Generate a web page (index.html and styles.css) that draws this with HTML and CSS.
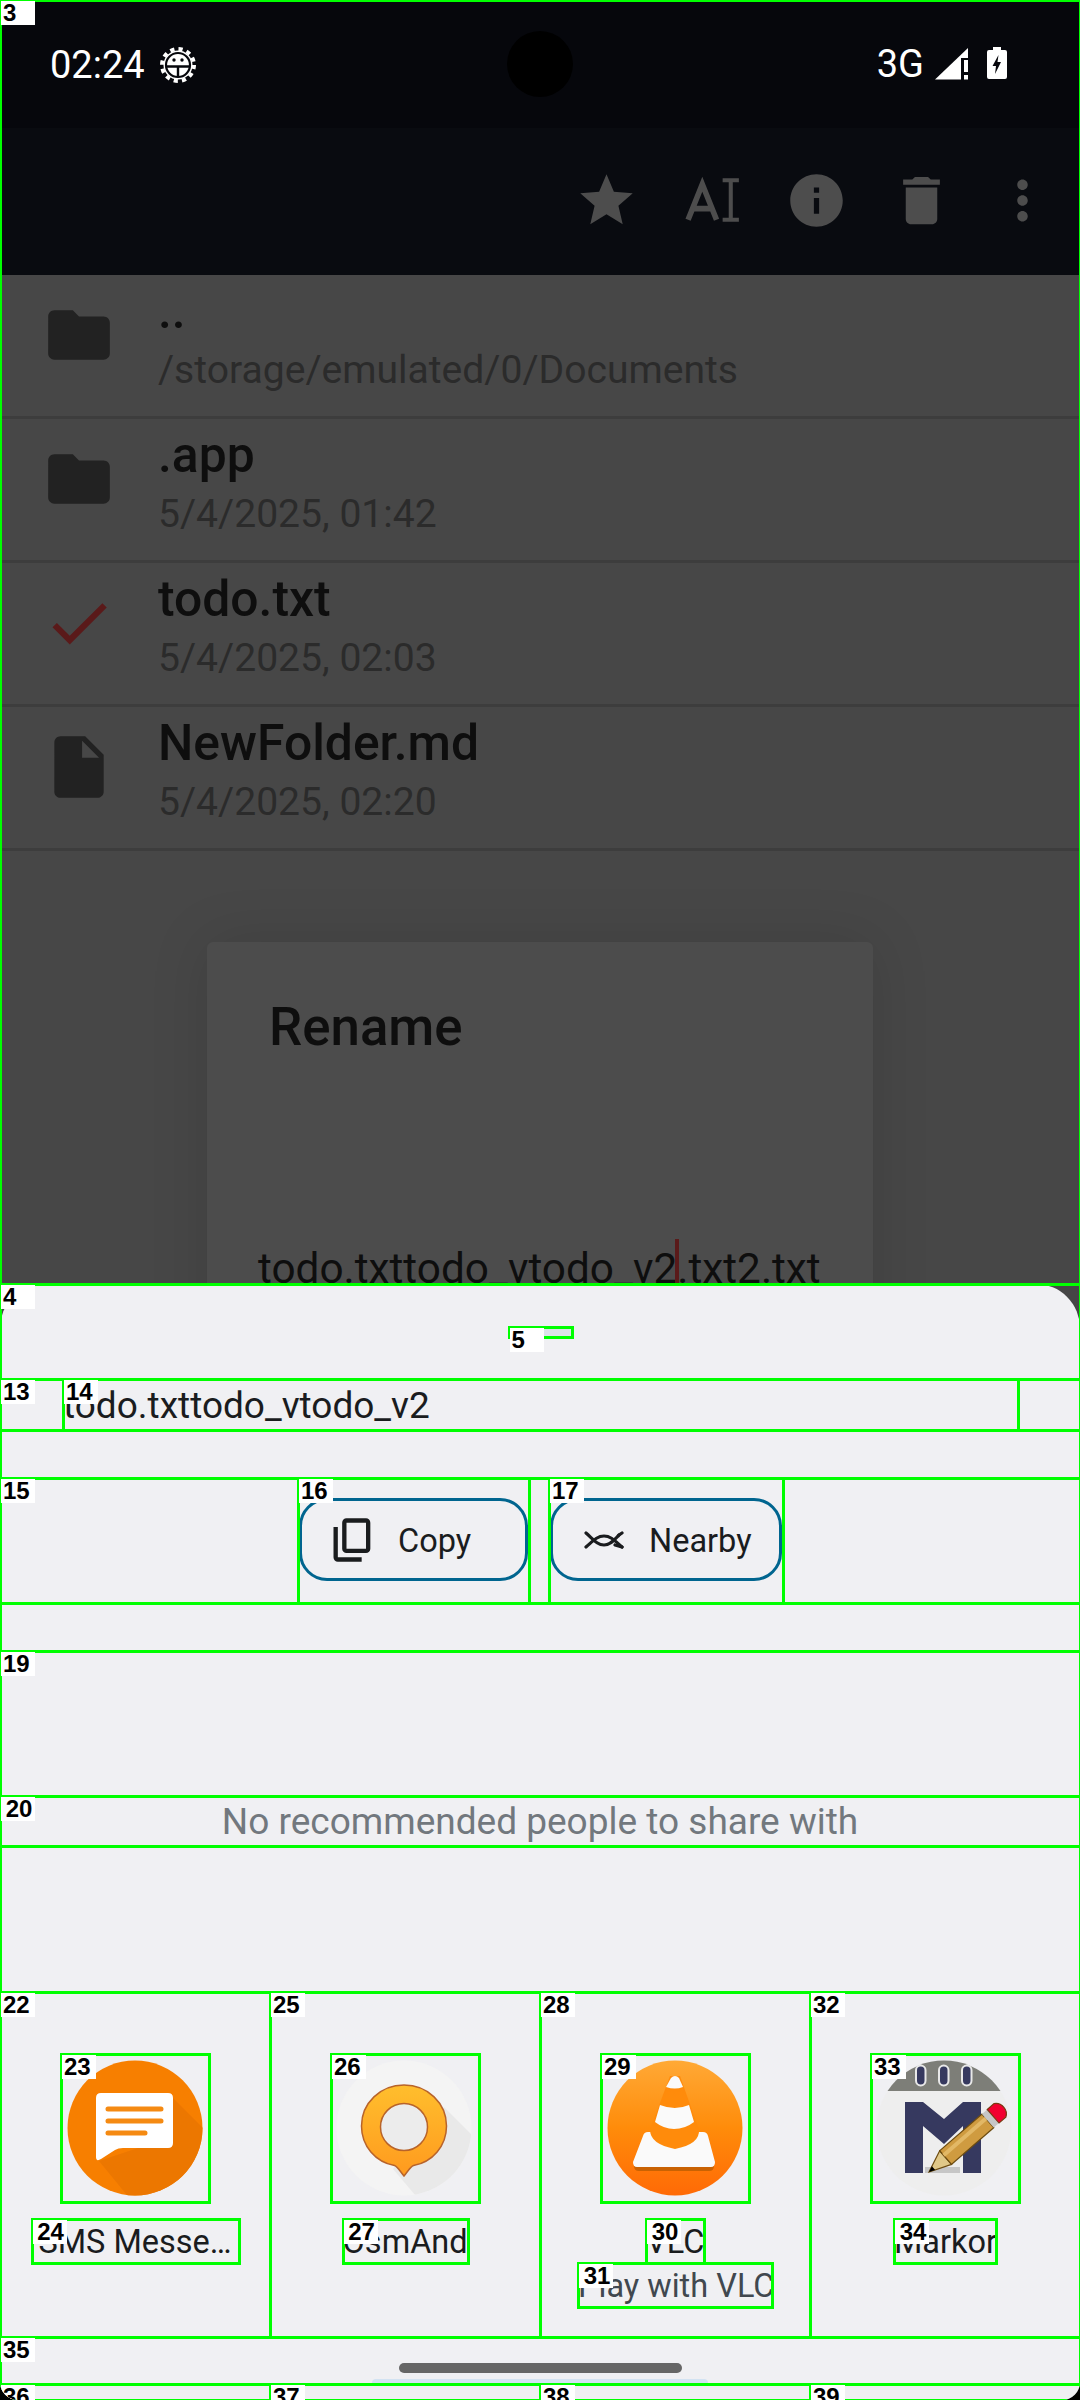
FILE: index.html
```html
<!DOCTYPE html>
<html lang="en">

<head>
  <meta charset="UTF-8">
  <meta name="viewport" content="width=device-width, initial-scale=1.0">
  <title>Rename - share sheet</title>
  <link rel="stylesheet" href="styles.css">
</head>

<body>
  <div class="screen">

    <!-- dimmed file browser behind the sheet -->
    <div class="backdrop mk">
      <span class="tag">3</span>
      <div class="status">
        <span class="clock">02:24</span>
        <svg class="status-gear" viewBox="0 0 38 38">
          <circle cx="19" cy="19" r="14.500" fill="#fff" />
          <circle cx="19" cy="19" r="16" fill="none" stroke="#fff" stroke-width="4" stroke-dasharray="4.200 4.180" />
          <circle cx="19" cy="19" r="12" fill="none" stroke="#06070c" stroke-width="2.200" />
          <circle cx="15" cy="14" r="1.700" fill="#06070c" />
          <circle cx="23" cy="14" r="1.700" fill="#06070c" />
          <path d="M7 20.500h24M19 20.500v11" stroke="#06070c" stroke-width="2.400" fill="none" />
        </svg>
        <span class="spacer"></span>
        <span class="network">3G</span>
        <svg class="status-signal" viewBox="0 0 34 32">
          <path d="M0 31.500L33 31.500V0z" fill="#fff" />
          <path d="M26 10h8v22h-8z" fill="#06070c" />
          <path d="M29 12h4v12h-4zM29 27h4v4.500h-4z" fill="#fff" />
        </svg>
        <svg class="status-battery" viewBox="0 0 20 32">
          <path d="M6 0h8v3h4q2 0 2 2v25q0 2-2 2H2q-2 0-2-2V5q0-2 2-2h4z" fill="#fff" />
          <path d="M11.500 8L5.500 19h3.500l-1 8 6-12h-3.500z" fill="#06070c" />
        </svg>
        <span class="camera"></span>
      </div>

      <div class="toolbar">
        <span class="tool">
          <svg viewBox="0 0 24 24"><path d="M12 17.270L18.180 21l-1.640-7.030L22 9.240l-7.190-.610L12 2 9.190 8.630 2 9.240l5.460 4.730L5.820 21z" /></svg>
        </span>
        <span class="tool tool-rename">
          <svg viewBox="0 0 62 46">
            <path d="M5 42L19 7l14 35M10 31h18" fill="none" stroke="#4d4d4d" stroke-width="5.500" />
            <path d="M39 3h16M39 42h16M47 3v39" fill="none" stroke="#4d4d4d" stroke-width="4" />
          </svg>
        </span>
        <span class="tool">
          <svg viewBox="0 0 24 24"><path d="M12 2C6.480 2 2 6.480 2 12s4.480 10 10 10 10-4.480 10-10S17.520 2 12 2zm1 15h-2v-6h2v6zm0-8h-2V7h2v2z" /></svg>
        </span>
        <span class="tool">
          <svg viewBox="0 0 24 24"><path d="M6 19c0 1.100.9 2 2 2h8c1.100 0 2-.9 2-2V7H6v12zM19 4h-3.500l-1-1h-5l-1 1H5v2h14V4z" /></svg>
        </span>
        <span class="tool tool-more">
          <svg viewBox="0 0 24 24"><path d="M12 8c1.100 0 2-.9 2-2s-.9-2-2-2-2 .9-2 2 .9 2 2 2zm0 2c-1.100 0-2 .9-2 2s.9 2 2 2 2-.9 2-2-.9-2-2-2zm0 6c-1.100 0-2 .9-2 2s.9 2 2 2 2-.9 2-2-.9-2-2-2z" /></svg>
        </span>
      </div>

      <div class="file-row">
        <svg class="file-icon" viewBox="0 0 24 24"><path d="M10 4H4c-1.100 0-1.990.9-1.990 2L2 18c0 1.100.9 2 2 2h16c1.100 0 2-.9 2-2V8c0-1.100-.9-2-2-2h-8l-2-2z" /></svg>
        <div class="file-text">
          <div class="file-name">..</div>
          <div class="file-sub">/storage/emulated/0/Documents</div>
        </div>
      </div>
      <div class="file-row">
        <svg class="file-icon" viewBox="0 0 24 24"><path d="M10 4H4c-1.100 0-1.990.9-1.990 2L2 18c0 1.100.9 2 2 2h16c1.100 0 2-.9 2-2V8c0-1.100-.9-2-2-2h-8l-2-2z" /></svg>
        <div class="file-text">
          <div class="file-name">.app</div>
          <div class="file-sub">5/4/2025, 01:42</div>
        </div>
      </div>
      <div class="file-row">
        <svg class="file-icon file-check" viewBox="0 0 24 24"><path d="M9 16.170L4.830 12l-1.420 1.410L9 19 21 7l-1.410-1.410z" /></svg>
        <div class="file-text">
          <div class="file-name">todo.txt</div>
          <div class="file-sub">5/4/2025, 02:03</div>
        </div>
      </div>
      <div class="file-row">
        <svg class="file-icon" viewBox="0 0 24 24"><path d="M6 2c-1.100 0-1.990.9-1.990 2L4 20c0 1.100.89 2 1.990 2H18c1.100 0 2-.9 2-2V8l-6-6H6zm7 7V3.500L18.500 9H13z" /></svg>
        <div class="file-text">
          <div class="file-name">NewFolder.md</div>
          <div class="file-sub">5/4/2025, 02:20</div>
        </div>
      </div>

      <div class="dialog">
        <div class="dialog-title">Rename</div>
        <div class="dialog-input">todo.txttodo_vtodo_v2<span class="cursor"></span>.txt2.txt</div>
      </div>
    </div>

    <!-- share sheet -->
    <div class="sheet mk">
      <span class="tag">4</span>
      <div class="handle mk"><span class="tag">5</span></div>

      <div class="preview mk">
        <span class="tag">13</span>
        <div class="preview-text mk"><span class="tag">14</span>todo.txttodo_vtodo_v2</div>
      </div>

      <div class="actions mk">
        <span class="tag">15</span>
        <div class="action action-copy mk">
          <span class="tag">16</span>
          <div class="chip">
            <svg class="chip-copy" viewBox="0 0 24 24"><path d="M9 18q-.825 0-1.412-.587Q7 16.825 7 16V4q0-.825.588-1.413Q8.175 2 9 2h9q.825 0 1.413.587Q20 3.175 20 4v12q0 .825-.587 1.413Q18.825 18 18 18zm0-2h9V4H9zm-4 6q-.825 0-1.412-.587Q3 20.825 3 20V6h2v14h11v2z" /></svg>
            <span class="chip-label">Copy</span>
          </div>
        </div>
        <div class="action action-nearby mk">
          <span class="tag">17</span>
          <div class="chip">
            <svg class="chip-nearby" viewBox="0 0 40 18">
              <path d="M2 2C9 8 13 14 20 14S31 8 35 4M31 14l7 2" fill="none" stroke="#1a1c1e" stroke-width="3.200" stroke-linecap="round" />
              <path d="M2 16C9 10 13 5 20 5S31 10 38 16M35 4l3-2" fill="none" stroke="#1a1c1e" stroke-width="3.200" stroke-linecap="round" />
            </svg>
            <span class="chip-label">Nearby</span>
          </div>
        </div>
      </div>

      <div class="people-top mk"><span class="tag">19</span></div>
      <div class="people-note mk"><span class="tag">20</span>No recommended people to share with</div>
      <div class="people-bottom mk"></div>

      <div class="apps">
        <div class="app mk">
          <span class="tag">22</span>
          <div class="app-icon mk">
            <span class="tag">23</span>
            <svg viewBox="0 0 148 148">
              <defs>
                <clipPath id="clip-sms"><circle cx="74" cy="74" r="67.500" /></clipPath>
              </defs>
              <circle cx="74" cy="74" r="67.500" fill="#f77f00" />
              <path d="M112 44l32 32v70H70L38 107l60-20z" fill="#ec7700" clip-path="url(#clip-sms)" />
              <path d="M40 39h67q5 0 5 5v45q0 5-5 5H62q-5 0-8 2l-14 9q-5 3-5-2V44q0-5 5-5z" fill="#fff" />
              <path d="M47 55h53M47 67h53M47 79h37" stroke="#f58a12" stroke-width="5" stroke-linecap="round" fill="none" />
            </svg>
          </div>
          <div class="app-name app-sms mk"><span class="tag">24</span>SMS Messe…</div>
        </div>

        <div class="app mk">
          <span class="tag">25</span>
          <div class="app-icon mk">
            <span class="tag">26</span>
            <svg viewBox="0 0 148 148">
              <defs>
                <clipPath id="clip-osm"><circle cx="73" cy="74" r="67.500" /></clipPath>
                <linearGradient id="pin-fill" x1="0" y1="0" x2="0" y2="1">
                  <stop offset="0" stop-color="#ffbe2d" />
                  <stop offset="1" stop-color="#ff9a1e" />
                </linearGradient>
              </defs>
              <circle cx="73" cy="74" r="67.500" fill="#f4f4f4" />
              <path d="M113 53l35 35v60H90L62 115z" fill="#e9e9e9" clip-path="url(#clip-osm)" />
              <path d="M73 31c23.500 0 42.500 18 42.500 41 0 20-14 36-33 39.500-3 1-5 5-9.500 10.500-4.500-5.500-6.500-9.500-9.500-10.500C44.500 108 30.500 92 30.500 72c0-23 19-41 42.500-41z" fill="url(#pin-fill)" stroke="#b8632a" stroke-width="1.500" />
              <circle cx="73" cy="73" r="23.500" fill="#ececec" stroke="#b8632a" stroke-width="1.500" />
            </svg>
          </div>
          <div class="app-name app-osm mk"><span class="tag">27</span>OsmAnd</div>
        </div>

        <div class="app mk">
          <span class="tag">28</span>
          <div class="app-icon mk">
            <span class="tag">29</span>
            <svg viewBox="0 0 148 148">
              <defs>
                <linearGradient id="vlc-fill" x1="0" y1="0" x2="0" y2="1">
                  <stop offset="0" stop-color="#ffa936" />
                  <stop offset="0.5" stop-color="#ff8c0a" />
                  <stop offset="1" stop-color="#ff6a06" />
                </linearGradient>
              </defs>
              <circle cx="74" cy="74" r="67.500" fill="url(#vlc-fill)" />
              <path d="M33 108h80v4q0 5-5 5H38q-5 0-5-5z" fill="#c96203" />
              <path d="M42 82q1-4 5-4h55q4 0 5 4l7 26q0 5-4 5H36q-4 0-4-5z" fill="#fafafa" />
              <path d="M49 76l20-54h10l19 54q1 14-24 19-25-5-25-19z" fill="#ff8b0b" />
              <path d="M65 33l5-9q4-4 8 0l4 9q-8 3-17 0z" fill="#fafafa" />
              <path d="M59 51q15 6 29 0l5 17q-9 7-20 7-10 0-19-7z" fill="#fafafa" />
            </svg>
          </div>
          <div class="app-name app-vlc mk"><span class="tag">30</span>VLC</div>
          <div class="app-sub mk"><span class="tag">31</span>Play with VLC</div>
        </div>

        <div class="app mk">
          <span class="tag">32</span>
          <div class="app-icon mk">
            <span class="tag">33</span>
            <svg viewBox="0 0 148 148">
              <defs>
                <clipPath id="clip-markor"><rect x="0" y="0" width="148" height="37" /></clipPath>
              </defs>
              <circle cx="73" cy="74" r="67.500" fill="#eeeeee" />
              <circle cx="73" cy="74" r="67.500" fill="#7d7e78" clip-path="url(#clip-markor)" />
              <rect x="45" y="11.500" width="9.500" height="20" rx="4.700" fill="#36395f" stroke="#e8e8e8" stroke-width="2" />
              <rect x="68" y="11.500" width="9.500" height="20" rx="4.700" fill="#36395f" stroke="#e8e8e8" stroke-width="2" />
              <rect x="91" y="11.500" width="9.500" height="20" rx="4.700" fill="#36395f" stroke="#e8e8e8" stroke-width="2" />
              <path d="M34 48h18l21 17 19-17h18v71H92V72L73 90 52 72v47H34z" fill="#36395f" />
              <rect x="54" y="113" width="35" height="6" fill="#c6c6c6" />
              <g transform="translate(58 118) rotate(-41)">
                <path d="M0 0L22-9V9z" fill="#e0c888" stroke="#6d4c10" stroke-width="1.200" />
                <path d="M0 0L6-2.500V2.500z" fill="#000" />
                <path d="M22-9h56V9H22z" fill="#cf9b40" stroke="#6d4c10" stroke-width="1.200" />
                <path d="M22-3h56" stroke="#e2b866" stroke-width="4" />
                <path d="M78-9h7V9h-7z" fill="#c6c6c6" />
                <path d="M85-9h9q5 3 5 9t-5 9h-9z" fill="#f2002f" stroke="#7a3a10" stroke-width="1.200" />
              </g>
            </svg>
          </div>
          <div class="app-name app-markor mk"><span class="tag">34</span>Markor</div>
        </div>
      </div>

      <div class="nav mk">
        <span class="tag">35</span>
        <span class="nav-pill"></span>
        <span class="nav-peek"></span>
      </div>

      <div class="apps apps-next">
        <div class="app mk"><span class="tag">36</span></div>
        <div class="app mk"><span class="tag">37</span></div>
        <div class="app mk"><span class="tag">38</span></div>
        <div class="app mk"><span class="tag">39</span></div>
      </div>
    </div>

  </div>
</body>

</html>
```

FILE: styles.css
```css
/* Base styles */
html,
body {
  margin: 0;
  background: #000;
}

.screen {
  width: 1080px;
  height: 2400px;
  overflow: hidden;
  background: #464646;
  border-radius: 0 0 18px 18px;
  font-family: Roboto, sans-serif;
}

/* Green element outlines and number tags */
.mk {
  position: relative;
}

.mk::after {
  content: "";
  position: absolute;
  top: -1px;
  left: -1px;
  right: -2px;
  bottom: -2px;
  border: 3px solid #00ff00;
  pointer-events: none;
}

.tag {
  position: absolute;
  top: 1px;
  left: 1px;
  z-index: 2;
  width: 32px;
  height: 24px;
  padding-left: 2px;
  background: #fff;
  color: #000;
  font: bold 24px/24px "Liberation Sans", sans-serif;
}

/* Dimmed page behind the sheet */
.backdrop {
  height: 1284px;
  overflow: hidden;
  background: #474747;
}

.status {
  height: 128px;
  display: flex;
  align-items: flex-start;
  padding: 0 73px 0 50px;
  box-sizing: border-box;
  background: #06070c;
  color: #fff;
}

.clock {
  margin-top: 43px;
  font-size: 38px;
  line-height: 44px;
}

.status-gear {
  width: 38px;
  height: 38px;
  margin: 46px 0 0 14px;
}

.spacer {
  flex: 1;
}

.network {
  margin-top: 42px;
  font-size: 38px;
  line-height: 44px;
}

.status-signal {
  width: 34px;
  height: 32px;
  margin: 48px 0 0 11px;
}

.status-battery {
  width: 20px;
  height: 32px;
  margin: 47px 0 0 18px;
}

.camera {
  position: absolute;
  top: 31px;
  left: 507px;
  width: 66px;
  height: 66px;
  border-radius: 50%;
  background: #000;
}

.toolbar {
  height: 147px;
  display: flex;
  justify-content: flex-end;
  align-items: center;
  padding: 0 10px 2px 0;
  box-sizing: border-box;
  background: #090b10;
}

.tool {
  width: 105px;
  display: flex;
  justify-content: center;
}

.tool svg {
  width: 63px;
  height: 63px;
  fill: #4d4d4d;
}

.tool-rename svg {
  margin-left: 6px;
}

.tool-more {
  width: 96px;
}

/* File list */
.file-row {
  height: 144px;
  display: flex;
  box-sizing: border-box;
  border-bottom: 3px solid #3d3d3d;
}

.file-icon {
  width: 74px;
  height: 74px;
  margin: 23px 42px 0;
  fill: #222;
  flex: none;
}

.file-check {
  fill: #5a1a1a;
}

.file-text {
  padding-top: 7px;
}

.file-name {
  font-size: 49.800px;
  font-weight: 500;
  line-height: 58px;
  color: #0e0e0e;
}

.file-sub {
  margin-top: 8px;
  font-size: 39.100px;
  line-height: 45px;
  color: #2b2b2b;
}

/* Rename dialog, cut off by the sheet */
.dialog {
  width: 666px;
  height: 600px;
  margin: 91px 0 0 207px;
  border-radius: 6px;
  background: #4c4c4c;
  box-shadow: 0 0 60px rgba(0, 0, 0, 0.12);
  color: #0e0e0e;
}

.dialog-title {
  padding: 55px 0 0 62px;
  font-size: 52.800px;
  font-weight: 500;
  line-height: 60px;
}

.dialog-input {
  margin-top: 182px;
  padding-left: 51px;
  font-size: 42.300px;
  line-height: 46px;
  white-space: nowrap;
}

.cursor {
  display: inline-block;
  width: 4px;
  height: 50px;
  margin: 0 -2px;
  vertical-align: -6px;
  background: #5a1a1a;
}

/* Share sheet */
.sheet {
  height: 1116px;
  background: #f0f0f3;
  border-radius: 44px 44px 0 0;
}

.handle {
  width: 63px;
  height: 10px;
  margin: 0 auto;
  top: 43px;
  background: #dde3ea;
}

.preview {
  height: 51px;
  margin-top: 85px;
  color: #1a1c1e;
}

.preview-text {
  width: 955px;
  height: 51px;
  margin-left: 63px;
  font-size: 37px;
  line-height: 53px;
  white-space: nowrap;
}

.actions {
  height: 125px;
  margin-top: 48px;
  display: flex;
  padding-left: 298px;
}

.action {
  display: flex;
  padding: 20px 1px 22px;
}

.action-copy {
  width: 229px;
  margin-right: 20px;
}

.action-nearby {
  width: 232px;
}

.chip {
  flex: 1;
  display: flex;
  align-items: center;
  border: 3px solid #00658f;
  border-radius: 28px;
  font-size: 32.500px;
  color: #1a1c1e;
}

.chip-label {
  padding-top: 2px;
}

.chip-copy {
  width: 52px;
  height: 52px;
  margin: 0 19px 0 25px;
  fill: #1a1c1e;
}

.chip-nearby {
  width: 40px;
  height: 18px;
  margin: 0 25px 0 31px;
}

.people-top {
  height: 145px;
  margin-top: 48px;
}

.people-note {
  height: 50px;
  font-size: 37px;
  line-height: 52px;
  text-align: center;
  color: #72787e;
}

.people-bottom {
  height: 146px;
}

/* App targets */
.apps {
  display: grid;
  grid-template-columns: repeat(4, 270px);
}

.app {
  height: 345px;
  display: flex;
  flex-direction: column;
  align-items: center;
  box-sizing: border-box;
  padding-top: 62px;
}

.app-icon {
  width: 148px;
  height: 148px;
  margin-bottom: 17px;
}

.app-icon svg {
  display: block;
  width: 148px;
  height: 148px;
}

.app-name,
.app-sub {
  height: 44px;
  font-size: 32.500px;
  line-height: 46px;
  text-align: center;
  white-space: nowrap;
  color: #1a1c1e;
}

.app-sub {
  color: #41484f;
}

.app-sms {
  width: 207px;
}

.app-osm {
  width: 125px;
}

.app-vlc {
  width: 58px;
}

.app-sub {
  width: 194px;
}

.app-markor {
  width: 102px;
}

.nav {
  height: 47px;
  display: flex;
  flex-direction: column;
  align-items: center;
  box-sizing: border-box;
  padding-top: 26px;
}

.nav-pill {
  width: 283px;
  height: 10px;
  border-radius: 5px;
  background: #666;
}

.nav-peek {
  width: 336px;
  height: 5px;
  margin-top: 6px;
  border-radius: 4px 4px 0 0;
  background: #d3e3f2;
}

.apps-next .app {
  height: 16px;
  padding: 0;
}
```
